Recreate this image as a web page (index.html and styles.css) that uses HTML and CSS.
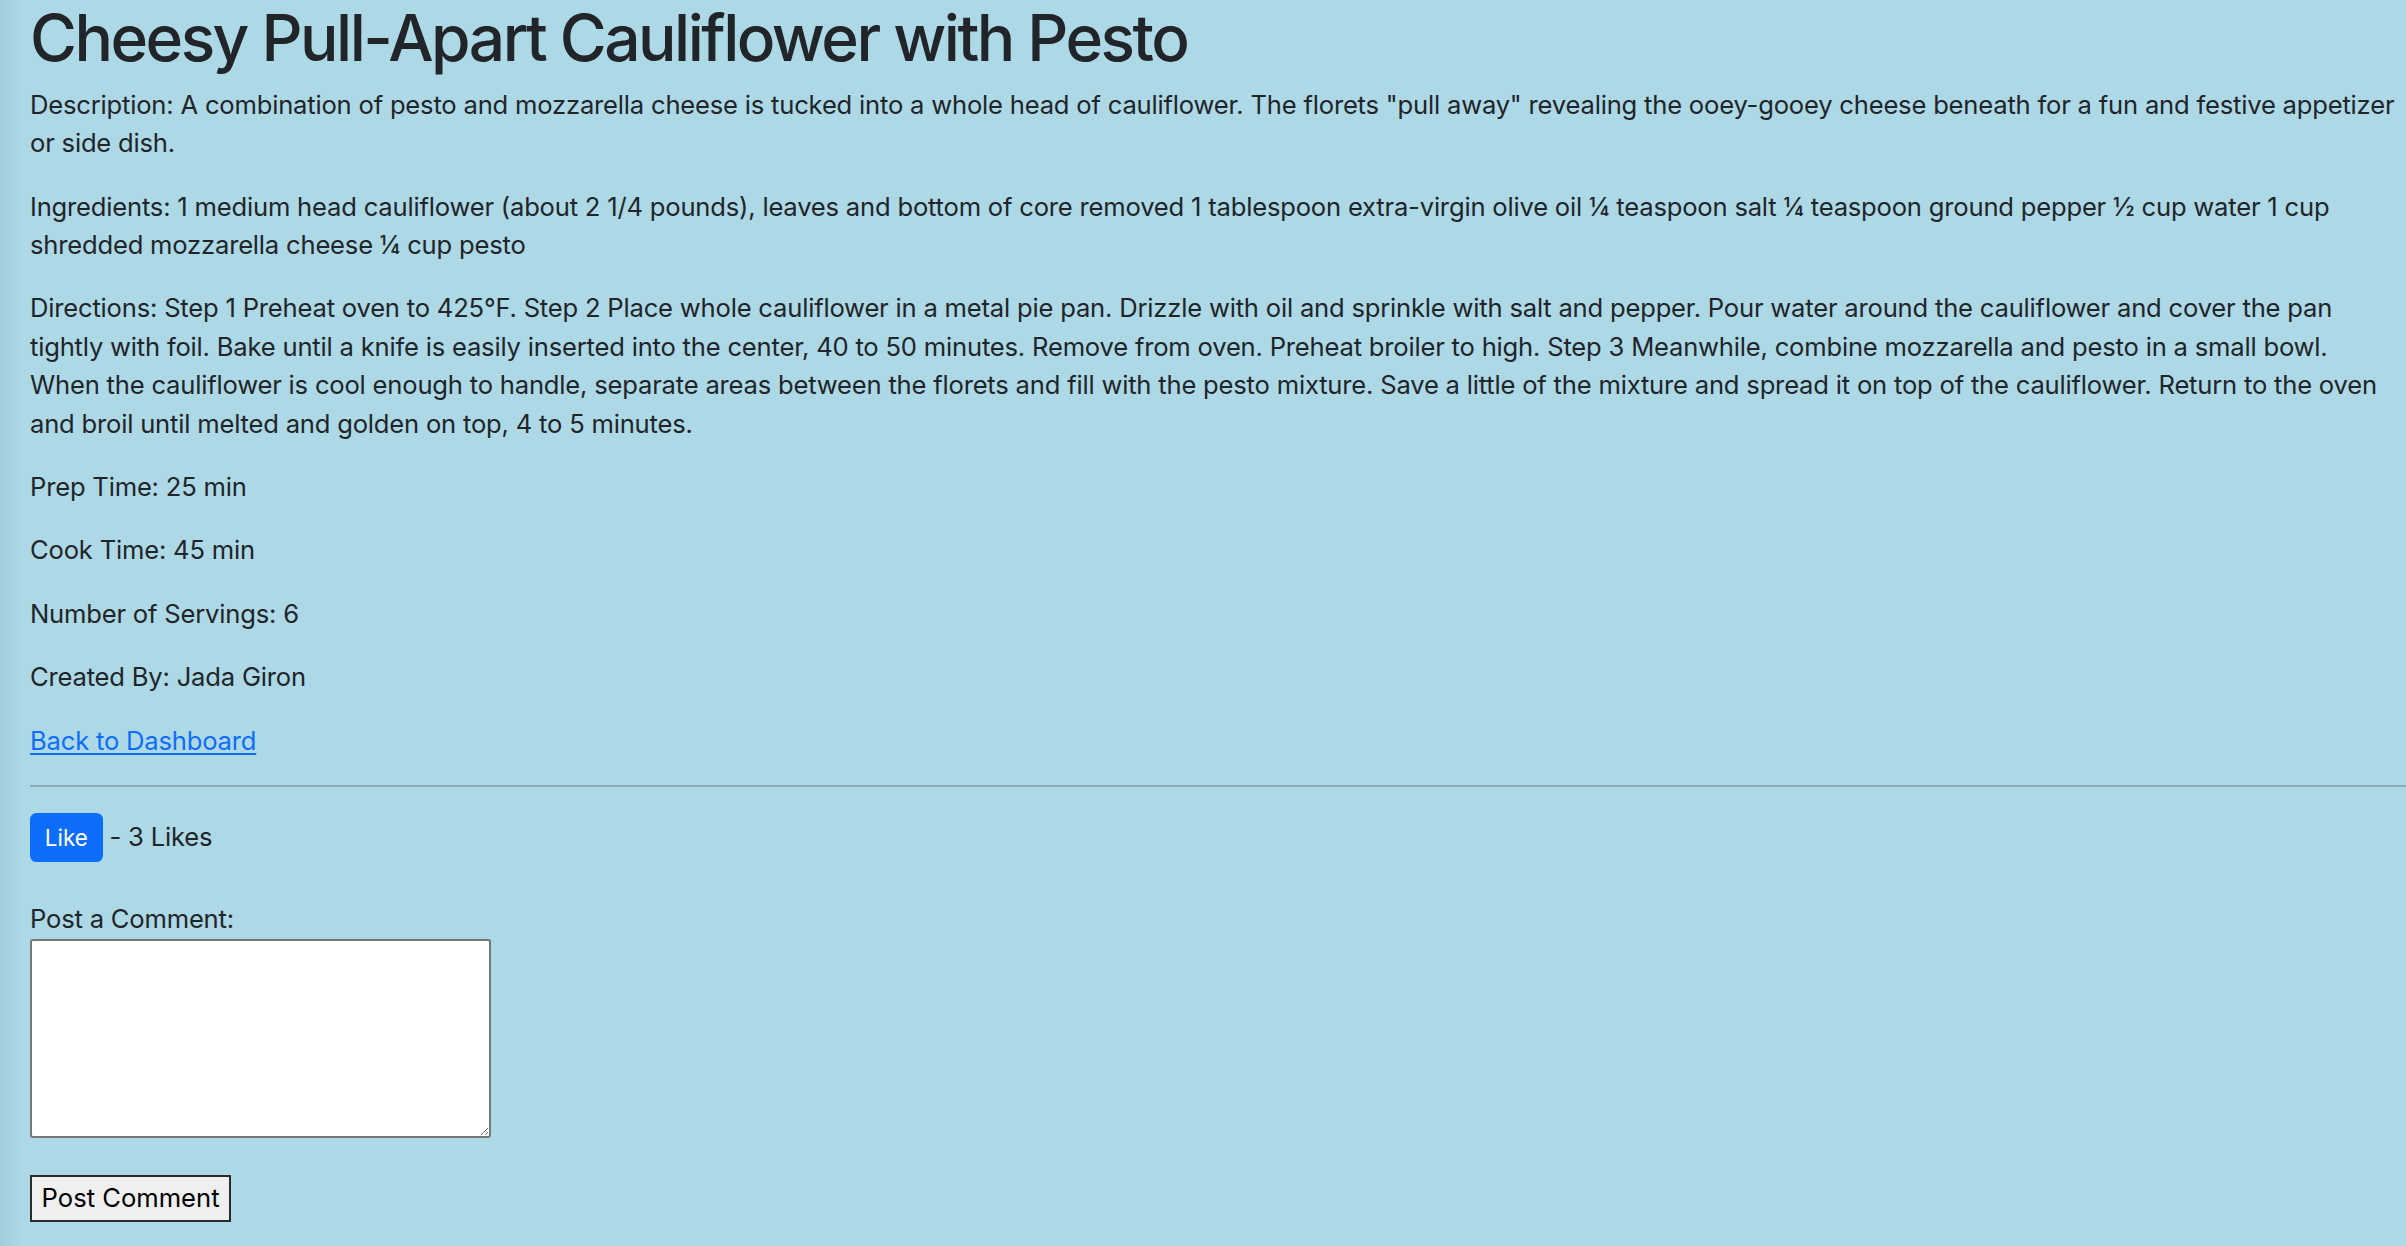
FILE: index.html
```html
<!DOCTYPE html>
<html lang="en">
<head>
<meta charset="utf-8">
<title>Cheesy Pull-Apart Cauliflower with Pesto</title>
<link rel="stylesheet" href="styles.css">
</head>
<body>
<main class="page">
  <h1 class="title">Cheesy Pull-Apart Cauliflower with Pesto</h1>
  <p class="field">Description: A combination of pesto and mozzarella cheese is tucked into a whole head of cauliflower. The florets "pull away" revealing the ooey-gooey cheese beneath for a fun and festive appetizer or side dish.</p>
  <p class="field">Ingredients: 1 medium head cauliflower (about 2 1/4 pounds), leaves and bottom of core removed 1 tablespoon extra-virgin olive oil ¼ teaspoon salt ¼ teaspoon ground pepper ½ cup water 1 cup shredded mozzarella cheese ¼ cup pesto</p>
  <p class="field">Directions: Step 1 Preheat oven to 425°F. Step 2 Place whole cauliflower in a metal pie pan. Drizzle with oil and sprinkle with salt and pepper. Pour water around the cauliflower and cover the pan tightly with foil. Bake until a knife is easily inserted into the center, 40 to 50 minutes. Remove from oven. Preheat broiler to high. Step 3 Meanwhile, combine mozzarella and pesto in a small bowl. When the cauliflower is cool enough to handle, separate areas between the florets and fill with the pesto mixture. Save a little of the mixture and spread it on top of the cauliflower. Return to the oven and broil until melted and golden on top, 4 to 5 minutes.</p>
  <p class="field">Prep Time: 25 min</p>
  <p class="field">Cook Time: 45 min</p>
  <p class="field">Number of Servings: 6</p>
  <p class="field">Created By: Jada Giron</p>
  <p class="field"><a class="back-link" href="#">Back to Dashboard</a></p>
  <hr class="divider">
  <div class="likes"><button class="like-btn" type="button">Like</button> - 3 Likes</div>
  <form class="comment-form">
    <label class="comment-label" for="comment">Post a Comment:</label>
    <textarea class="comment-box" id="comment" name="comment"></textarea>
    <div class="actions"><button class="post-btn" type="button">Post Comment</button></div>
  </form>
</main>
</body>
</html>
```
FILE: styles.css
```css
html, body {
  margin: 0;
  padding: 0;
}
body {
  background: linear-gradient(90deg, rgba(0, 40, 60, 0.06) 0, rgba(0, 40, 60, 0) 22px), #add8e6;
  color: #212529;
  font-family: Inter, "Noto Sans", "Liberation Sans", sans-serif;
  font-size: 25.6px;
  line-height: 38.4px;
  letter-spacing: -0.2px;
  min-height: 1246px;
}
.page {
  padding: 0 0 0 30px;
}
.field {
  margin: 0 0 25px;
  padding-right: 7px;
}
.title {
  margin: 0 0 9px;
  font-size: 64px;
  line-height: 76.8px;
  font-weight: 500;
  letter-spacing: -2.5px;
}
.back-link {
  color: #0d6efd;
  text-decoration: underline;
  text-underline-offset: 3px;
  text-decoration-thickness: 2px;
}
.divider {
  border: 0;
  border-top: 2px solid rgba(33, 37, 41, 0.25);
  margin: 0 0 25.5px 0;
}
.likes {
  margin: 0 0 38px;
}
.like-btn {
  font-family: inherit;
  font-size: 22.4px;
  line-height: 33px;
  letter-spacing: 0;
  padding: 6.4px 12.8px;
  border: 2px solid #0d6efd;
  border-radius: 6.4px;
  background: #0d6efd;
  color: #fff;
  vertical-align: baseline;
}
.comment-form {
  display: flex;
  flex-direction: column;
  align-items: flex-start;
}
.comment-label {
  display: block;
  margin-bottom: 0;
}
.comment-box {
  box-sizing: border-box;
  width: 461px;
  height: 199px;
  border: 2px solid #767676;
  border-radius: 3px;
  background: #fff;
  font-family: inherit;
  font-size: inherit;
  margin: 0;
}
.actions {
  margin-top: 37px;
}
.post-btn {
  box-sizing: border-box;
  height: 47px;
  font-family: inherit;
  font-size: 25.6px;
  line-height: 38.4px;
  letter-spacing: 0;
  padding: 0 9.6px;
  border: 2px solid #2a2a2a;
  border-radius: 0;
  background: #efefef;
  color: #000;
}
```
